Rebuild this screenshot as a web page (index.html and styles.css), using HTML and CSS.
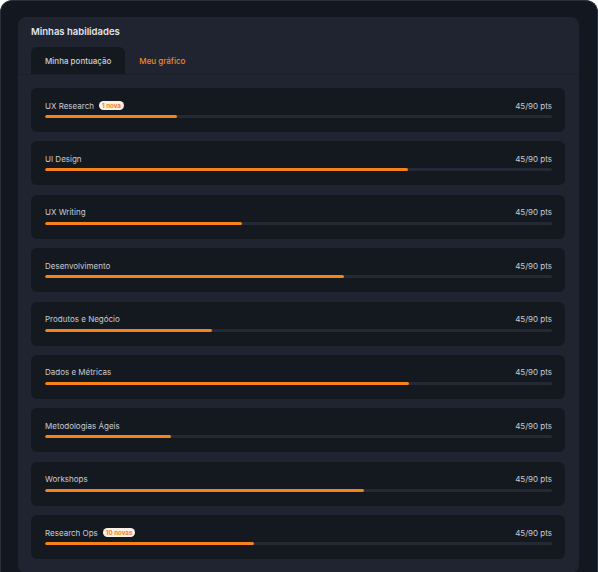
FILE: index.html
```html
<!DOCTYPE html>
<html lang="pt-BR">
<head>
<meta charset="utf-8">
<title>Minhas habilidades</title>
<link rel="stylesheet" href="styles.css">
</head>
<body>
<div class="frame">
  <section class="panel">
    <h2 class="title">Minhas habilidades</h2>
    <div class="tabs">
      <button class="tab active">Minha pontuação</button>
      <button class="tab">Meu gráfico</button>
    </div>
    <div class="list">
      <div class="card">
        <div class="row"><span class="label">UX Research</span><span class="badge">1 nova</span><span class="pts">45/90 pts</span></div>
        <div class="track"><div class="fill" style="width:26%"></div></div>
      </div>
      <div class="card">
        <div class="row"><span class="label">UI Design</span><span class="pts">45/90 pts</span></div>
        <div class="track"><div class="fill" style="width:71.6%"></div></div>
      </div>
      <div class="card">
        <div class="row"><span class="label">UX Writing</span><span class="pts">45/90 pts</span></div>
        <div class="track"><div class="fill" style="width:38.9%"></div></div>
      </div>
      <div class="card">
        <div class="row"><span class="label">Desenvolvimento</span><span class="pts">45/90 pts</span></div>
        <div class="track"><div class="fill" style="width:59%"></div></div>
      </div>
      <div class="card">
        <div class="row"><span class="label">Produtos e Negócio</span><span class="pts">45/90 pts</span></div>
        <div class="track"><div class="fill" style="width:32.9%"></div></div>
      </div>
      <div class="card">
        <div class="row"><span class="label">Dados e Métricas</span><span class="pts">45/90 pts</span></div>
        <div class="track"><div class="fill" style="width:71.8%"></div></div>
      </div>
      <div class="card">
        <div class="row"><span class="label">Metodologias Ágeis</span><span class="pts">45/90 pts</span></div>
        <div class="track"><div class="fill" style="width:24.9%"></div></div>
      </div>
      <div class="card">
        <div class="row"><span class="label">Workshops</span><span class="pts">45/90 pts</span></div>
        <div class="track"><div class="fill" style="width:62.9%"></div></div>
      </div>
      <div class="card">
        <div class="row"><span class="label">Research Ops</span><span class="badge">10 novas</span><span class="pts">45/90 pts</span></div>
        <div class="track"><div class="fill" style="width:41.2%"></div></div>
      </div>
    </div>
  </section>
</div>
</body>
</html>
```
FILE: styles.css
```css
* { box-sizing: border-box; }
html, body { margin: 0; padding: 0; }
body {
  background: #ffffff;
  overflow: hidden;
  height: 572px;
  font-family: Inter, "Noto Sans", "Liberation Sans", sans-serif;
}
.frame {
  width: 598px;
  min-height: 600px;
  background: #131820;
  border: 1px solid #2a3039;
  border-bottom: none;
  border-radius: 12px 12px 0 0;
  padding: 16px 18px 20px 17px;
}
.panel {
  background: #1f2430;
  border-radius: 8px;
  padding: 0 0 14px 0;
}
.title {
  margin: 0;
  padding: 8px 13px 0 13px;
  font-size: 9.5px;
  line-height: 14px;
  font-weight: 600;
  color: #e4e6ea;
}
.tabs {
  display: flex;
  margin-top: 8px;
  padding: 0 13px;
  border-bottom: 1px solid #1a1f28;
}
.tab {
  font-family: inherit;
  border: none;
  background: transparent;
  height: 27px;
  padding: 0 14px;
  font-size: 8px;
  font-weight: 500;
  color: #f08a24;
  border-radius: 6px 6px 0 0;
  cursor: pointer;
}
.tab.active {
  background: #141920;
  color: #cdd0d6;
}
.list {
  display: flex;
  flex-direction: column;
  gap: 9.375px;
  padding: 13px 14px 0 13px;
}
.card {
  height: 44px;
  background: #141920;
  border-radius: 6px;
  padding: 12px 13px 0 14px;
}
.row {
  display: flex;
  align-items: center;
  height: 11px;
}
.label {
  font-size: 8px;
  color: #c9ccd2;
}
.badge {
  margin-left: 5px;
  height: 9px;
  line-height: 9px;
  padding: 0 3px;
  border-radius: 5px;
  background: #fdf1e7;
  color: #f5821f;
  font-size: 6.2px;
  font-weight: 700;
}
.pts {
  margin-left: auto;
  font-size: 8px;
  color: #c9ccd2;
}
.track {
  margin-top: 4px;
  height: 3px;
  background: #242a35;
  border-radius: 2px;
  overflow: hidden;
}
.fill {
  height: 100%;
  background: #f7811a;
  border-radius: 2px;
}
```
